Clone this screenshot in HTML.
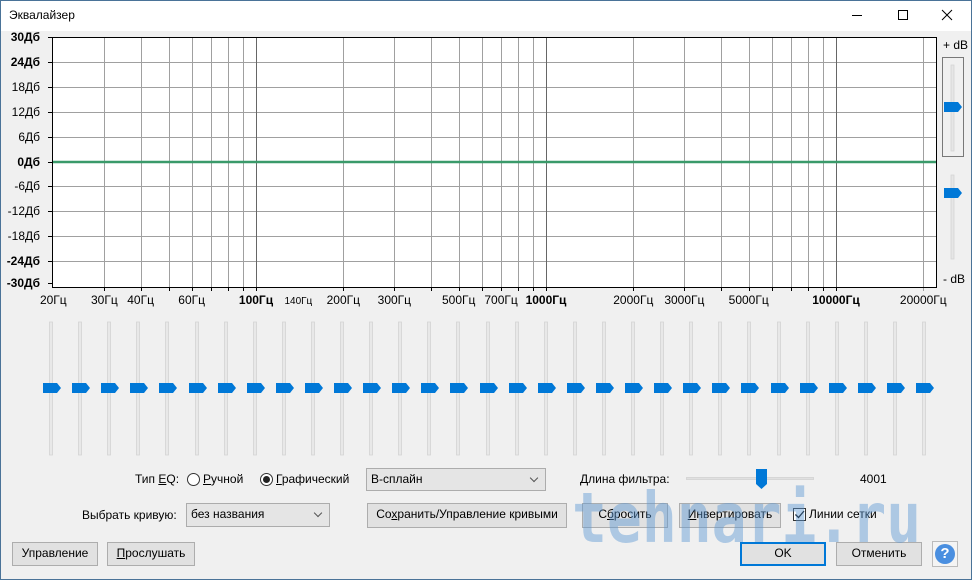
<!DOCTYPE html>
<html><head><meta charset="utf-8">
<style>
*{margin:0;padding:0;box-sizing:border-box}
body{width:972px;height:580px;overflow:hidden;background:#f0f0f0;font-family:"Segoe UI","Liberation Sans","DejaVu Sans",sans-serif;font-size:12px;color:#000;position:relative}
.a{position:absolute;white-space:nowrap}
#frame{position:absolute;left:0;top:0;width:972px;height:580px;border:1px solid #4a7398;pointer-events:none}
#title{position:absolute;left:0;top:0;width:972px;height:31px;background:#fff}
.btn{position:absolute;background:#e1e1e1;border:1px solid #adadad;text-align:center;line-height:21px}
.sel{position:absolute;background:#e5e5e5;border:1px solid #acacac;padding-left:4px;line-height:21px}
.sel:after{content:"";position:absolute;right:8px;top:6px;width:5px;height:5px;border-right:1px solid #555;border-bottom:1px solid #555;transform:rotate(45deg)}
.radio{position:absolute;width:13px;height:13px;border:1px solid #333;border-radius:50%;background:#fff}
u{text-decoration:underline}
</style></head><body>
<div id="title"></div>
<div class="a" style="left:9px;top:8px;font-size:12px">Эквалайзер</div>
<svg class="a" style="left:840px;top:0" width="132" height="31">
<line x1="12" y1="15.5" x2="22" y2="15.5" stroke="#000"/>
<rect x="58.5" y="10.5" width="9" height="9" fill="none" stroke="#000"/>
<path d="M102 10 L112 20 M112 10 L102 20" stroke="#000"/>
</svg>
<svg id="g" class="a" style="left:0;top:31px" width="972" height="290"></svg>
<svg id="s" class="a" style="left:0;top:315px" width="972" height="145"></svg>

<div class="a" style="left:135px;top:472px">Тип <u>E</u>Q:</div>
<div class="radio" style="left:187px;top:473px"></div>
<div class="a" style="left:203px;top:472px"><u>Р</u>учной</div>
<div class="radio" style="left:260px;top:473px"><div style="position:absolute;left:2px;top:2px;width:7px;height:7px;border-radius:50%;background:#222"></div></div>
<div class="a" style="left:276px;top:472px"><u>Г</u>рафический</div>
<div class="sel" style="left:366px;top:468px;width:180px;height:23px">B-сплайн</div>
<div class="a" style="left:580px;top:472px"><u>Д</u>лина фильтра:</div>
<div class="a" style="left:686px;top:477px;width:128px;height:3px;background:#e0e0e0;border:1px solid #d6d6d6"></div>
<svg class="a" style="left:756px;top:469px" width="12" height="21"><path d="M0 0H11V15L5.5 20L0 15Z" fill="#0078d7"/></svg>
<div class="a" style="left:860px;top:472px">4001</div>

<div class="a" style="left:82px;top:508px">Выбрать кривую:</div>
<div class="sel" style="left:186px;top:503px;width:144px;height:24px;background:#e5e5e5">без названия</div>
<div class="btn" style="left:367px;top:503px;width:200px;height:25px">Со<u>х</u>ранить/Управление кривыми</div>
<div class="btn" style="left:582px;top:503px;width:86px;height:25px">С<u>б</u>росить</div>
<div class="btn" style="left:679px;top:503px;width:102px;height:25px"><u>И</u>нвертировать</div>
<div class="a" style="left:793px;top:508px;width:13px;height:13px;border:1px solid #333;background:#fff"><svg width="11" height="11" style="position:absolute;left:0;top:0"><path d="M1.5 5.5L4.5 8.5L10 2" stroke="#000" stroke-width="1.3" fill="none"/></svg></div>
<div class="a" style="left:809px;top:507px">Линии сетки</div>

<div class="btn" style="left:12px;top:542px;width:86px;height:24px">Управление</div>
<div class="btn" style="left:107px;top:542px;width:88px;height:24px"><u>П</u>рослушать</div>
<div class="btn" style="left:740px;top:542px;width:86px;height:24px;border:2px solid #0078d7;line-height:19px">OK</div>
<div class="btn" style="left:836px;top:542px;width:86px;height:24px">Отменить</div>
<div class="a" style="left:932px;top:541px;width:26px;height:26px;border:1px solid #bbb;background:#f4f4f4"><div style="position:absolute;left:2px;top:2px;width:20px;height:20px;border-radius:50%;background:#4a8fe0;color:#fff;font-weight:bold;font-size:15px;text-align:center;line-height:20px">?</div></div>

<div class="a" style="left:572px;top:482px;font-family:'DejaVu Sans Mono','Liberation Mono',monospace;font-weight:bold;font-size:58px;letter-spacing:0px;color:rgba(90,150,210,0.45);line-height:60px;transform:scale(1,1.2);transform-origin:0 0">tehnari.ru</div>
<div id="frame"></div>

<script>
var g=document.getElementById('g'),h='';
var L=52,R=936,T=6,B=256;
h+='<rect x="'+L+'" y="'+T+'" width="'+(R-L)+'" height="'+(B-T)+'" fill="#fff"/>';
var dbY={30:6,24:31,18:56,12:81,6:106,0:131,'-6':155,'-12':180,'-18':205,'-24':230,'-30':252};
var bold={30:1,24:1,0:1,'-24':1,'-30':1};
[24,18,12,6,0,-6,-12,-18,-24].forEach(function(d){h+='<line x1="'+L+'" x2="'+R+'" y1="'+(dbY[d]+.5)+'" y2="'+(dbY[d]+.5)+'" stroke="#a0a0a0"/>';});
var fx=function(f){return 256+290*Math.log10(f/100);};
for(var dec=10;dec<=10000;dec*=10){for(var m=1;m<10;m++){var f=dec*m;if(f<=20||f>20000)continue;var x=Math.round(fx(f))+.5;var dk=(m==1);h+='<line x1="'+x+'" x2="'+x+'" y1="'+T+'" y2="'+B+'" stroke="'+(dk?'#666':'#a0a0a0')+'"/>';h+='<line x1="'+x+'" x2="'+x+'" y1="'+B+'" y2="'+(B+4)+'" stroke="#000"/>';}}
h+='<line x1="'+(fx(20000)|0)+'.5" x2="'+(fx(20000)|0)+'.5" y1="'+T+'" y2="'+(B+4)+'" stroke="#a0a0a0"/>';
h+='<rect x="'+(L+.5)+'" y="'+(T+.5)+'" width="'+(R-L)+'" height="'+(B-T)+'" fill="none" stroke="#000"/>';
h+='<line x1="'+(L+1)+'" x2="'+R+'" y1="131" y2="131" stroke="#3a9a6a" stroke-width="2.5"/>';
for(var k in dbY){var y=dbY[k];h+='<line x1="48" x2="52" y1="'+(y+.5)+'" y2="'+(y+.5)+'" stroke="#000"/>';h+='<text x="40" y="'+(y+4)+'" text-anchor="end" font-size="12" font-family="Liberation Sans,sans-serif" '+(bold[k]?'font-weight="bold"':'')+'>'+k+'Дб</text>';}
var fl=[[20,0],[30,0],[40,0],[60,0],[100,1],[140,2],[200,0],[300,0],[500,0],[700,0],[1000,1],[2000,0],[3000,0],[5000,0],[10000,1],[20000,0]];
fl.forEach(function(p){var x=fx(p[0]);h+='<text x="'+x+'" y="273" text-anchor="middle" font-size="'+(p[1]==2?10:12)+'" font-family="Liberation Sans,sans-serif" '+(p[1]==1?'font-weight="bold"':'')+'>'+p[0]+'Гц</text>';});
h+='<text x="943" y="18" font-size="12" font-family="Liberation Sans,sans-serif">+ dB</text>';
h+='<text x="943" y="252" font-size="12" font-family="Liberation Sans,sans-serif">- dB</text>';
h+='<rect x="942.5" y="26.5" width="21" height="99" fill="none" stroke="#000" stroke-dasharray="1,1"/>';
h+='<rect x="951" y="34" width="3" height="86" fill="#e6e6e6" stroke="#d0d0d0" stroke-width=".7"/>';
h+='<rect x="951" y="144" width="3" height="84" fill="#e6e6e6" stroke="#d0d0d0" stroke-width=".7"/>';
h+='<path d="M944 71h14l4 5l-4 5h-14z" fill="#0078d7"/>';
h+='<path d="M944 157h14l4 5l-4 5h-14z" fill="#0078d7"/>';
g.innerHTML=h;
var s=document.getElementById('s'),q='';
for(var i=0;i<31;i++){var cx=Math.round(51+i*29.1);q+='<rect x="'+(cx-1.5)+'" y="7" width="3" height="133" fill="#e8e8e8" stroke="#d0d0d0" stroke-width=".7"/>';q+='<path d="M'+(cx-8)+' 68h14l4 5l-4 5h-14z" fill="#0078d7"/>';}
s.innerHTML=q;
</script>
</body></html>
